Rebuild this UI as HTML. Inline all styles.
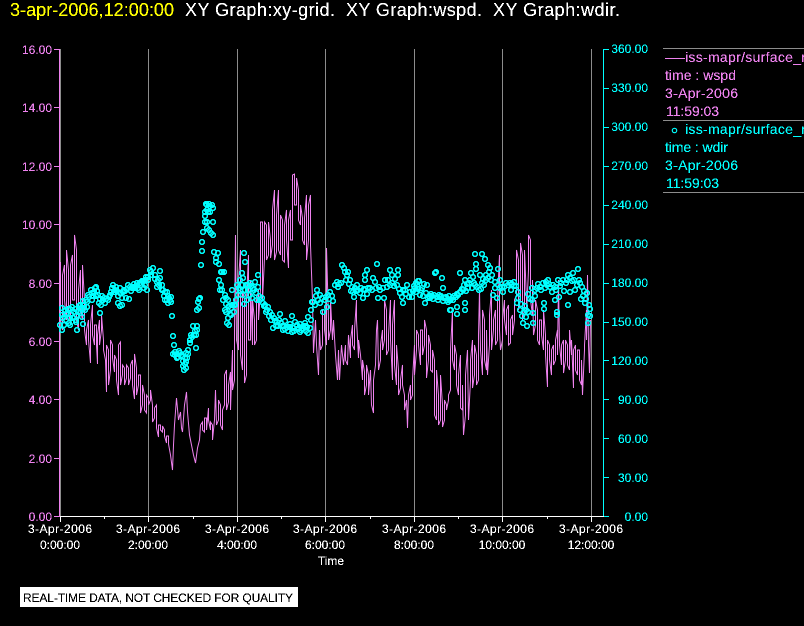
<!DOCTYPE html>
<html><head><meta charset="utf-8"><style>
html,body{margin:0;padding:0;background:#000;width:804px;height:626px;overflow:hidden}
svg{display:block;font-family:"Liberation Sans",sans-serif}
</style></head><body>
<svg width="804" height="626" viewBox="0 0 804 626">
<defs>
<marker id="m" markerUnits="userSpaceOnUse" markerWidth="8" markerHeight="8" refX="4" refY="4" overflow="visible"><circle cx="4" cy="4" r="2.4" fill="none" stroke="#0ff" stroke-width="1.5" shape-rendering="crispEdges"/></marker>
<filter id="a" filterUnits="userSpaceOnUse" x="0" y="0" width="804" height="626" color-interpolation-filters="sRGB"><feComponentTransfer><feFuncA type="discrete" tableValues="0 1 1"/></feComponentTransfer></filter>
</defs>
<rect width="804" height="626" fill="#000"/>
<g stroke="#8c8c8c" shape-rendering="crispEdges" fill="none">
<path d="M60.5 49V516M148.5 49V516M237.5 49V516M325.5 49V516M414.5 49V516M502.5 49V516M591.5 49V516"/>
<path d="M663 48.5H804M663 120.5H804M663 192.5H804"/>
</g>
<path d="M59.5 49V516M54 49.5H60M54 107.5H60M54 166.5H60M54 224.5H60M54 283.5H60M54 341.5H60M54 399.5H60M54 458.5H60M54 516.5H60" stroke="#ee82ee" fill="none" shape-rendering="crispEdges"/>
<path d="M603.5 49V516M603 49.5H609M603 88.5H609M603 127.5H609M603 166.5H609M603 205.5H609M603 244.5H609M603 283.5H609M603 322.5H609M603 360.5H609M603 399.5H609M603 438.5H609M603 477.5H609M603 516.5H609" stroke="#0ff" fill="none" shape-rendering="crispEdges"/>
<path d="M60 516.5H604M60.5 516V522M148.5 516V522M237.5 516V522M325.5 516V522M414.5 516V522M502.5 516V522M591.5 516V522M104.5 516V519M193.5 516V519M281.5 516V519M370.5 516V519M458.5 516V519M547.5 516V519" stroke="#fff" fill="none" shape-rendering="crispEdges"/>
<rect x="20" y="587" width="278" height="20" fill="#fff"/>
<g filter="url(#a)">
<g font-size="18">
<text x="10" y="16" fill="#ff0" textLength="164">3-apr-2006,12:00:00</text>
<g fill="#fff"><text x="185" y="16" textLength="150">XY Graph:xy-grid.</text><text x="346" y="16" textLength="136">XY Graph:wspd.</text><text x="493" y="16" textLength="127">XY Graph:wdir.</text></g>
</g>
<g font-size="12" fill="#ee82ee" text-anchor="end">
<text x="52" y="54">16.00</text><text x="52" y="112">14.00</text><text x="52" y="171">12.00</text><text x="52" y="229">10.00</text><text x="52" y="288">8.00</text><text x="52" y="346">6.00</text><text x="52" y="404">4.00</text><text x="52" y="463">2.00</text><text x="52" y="521">0.00</text>
</g>
<g font-size="12" fill="#0ff" text-anchor="end">
<text x="648" y="53">360.00</text><text x="648" y="92">330.00</text><text x="648" y="131">300.00</text><text x="648" y="170">270.00</text><text x="648" y="209">240.00</text><text x="648" y="248">210.00</text><text x="648" y="287">180.00</text><text x="648" y="326">150.00</text><text x="648" y="365">120.00</text><text x="648" y="404">90.00</text><text x="648" y="443">60.00</text><text x="648" y="482">30.00</text><text x="648" y="521">0.00</text>
</g>
<g font-size="12" fill="#fff" text-anchor="middle">
<text x="60" y="533" textLength="64">3-Apr-2006</text><text x="60" y="549">0:00:00</text>
<text x="148" y="533" textLength="64">3-Apr-2006</text><text x="148" y="549">2:00:00</text>
<text x="237" y="533" textLength="64">3-Apr-2006</text><text x="237" y="549">4:00:00</text>
<text x="325" y="533" textLength="64">3-Apr-2006</text><text x="325" y="549">6:00:00</text>
<text x="414" y="533" textLength="64">3-Apr-2006</text><text x="414" y="549">8:00:00</text>
<text x="502" y="533" textLength="64">3-Apr-2006</text><text x="502" y="549">10:00:00</text>
<text x="591" y="533" textLength="64">3-Apr-2006</text><text x="591" y="549">12:00:00</text>
<text x="331" y="565">Time</text>
</g>
<text x="23" y="602" font-size="12" fill="#000" textLength="270">REAL-TIME DATA, NOT CHECKED FOR QUALITY</text>
<g font-size="14" fill="#ee82ee">
<text x="685" y="62" textLength="128">iss-mapr/surface_m</text>
<text x="665" y="80" textLength="71">time : wspd</text>
<text x="665" y="98" textLength="73">3-Apr-2006</text>
<text x="666" y="116" textLength="53">11:59:03</text>
</g>
<g font-size="14" fill="#0ff">
<text x="685" y="134" textLength="128">iss-mapr/surface_m</text>
<text x="665" y="152" textLength="63">time : wdir</text>
<text x="665" y="170" textLength="73">3-Apr-2006</text>
<text x="666" y="188" textLength="53">11:59:03</text>
</g>
</g>
<path d="M665 58.5H685" stroke="#ee82ee" shape-rendering="crispEdges"/>
<circle cx="674.5" cy="130.5" r="2.2" fill="none" stroke="#0ff" stroke-width="1.2"/>
<polyline transform="translate(.5,0)" fill="none" stroke="#ee82ee" stroke-width="1" points="60,262 60,320 62,330 62,275 64,265 64,300 66,320 66,250 68,270 68,310 70,325 70,265 72,255 72,300 74,300 74,235 76,250 76,320 78,330 78,290 80,270 80,310 82,320 82,265 84,300 84,330 86,345 86,330 88,320 88,340 90,363 90,325 92,305 92,335 94,345 94,325 96,325 96,345 97,364 97,335 99,320 99,345 101,330 101,315 103,340 103,350 105,360 106,392 106,345 108,350 108,385 110,370 110,340 112,345 112,358 114,372 114,355 116,360 116,380 118,395 118,345 120,342 120,385 122,375 122,365 124,368 124,385 126,378 126,365 128,368 128,385 130,378 130,365 132,360 132,385 134,399 134,354 136,368 136,395 138,385 138,375 140,375 140,413 142,405 142,385 144,395 144,410 146,413 146,395 148,398 148,405 150,400 150,390 152,405 152,422 154,418 154,408 156,405 156,428 158,437 158,425 160,425 160,430 162,432 162,426 164,430 164,436 166,443 166,436 168,436 168,444 170,455 172,470 173,445 174,425 176,398 178,420 180,412 181,428 182,432 184,405 186,392 187,412 189,435 191,445 193,455 195,463 197,448 199,440 200,425 202,422 202,430 204,432 204,418 206,418 206,430 208,408 208,420 210,430 210,422 212,425 212,440 214,420 215,390 216,425 218,420 218,400 220,405 220,425 222,430 222,410 224,405 224,375 226,370 226,410 228,402 228,385 230,372 230,410 232,350 232,390 234,380 234,330 235,235 236,340 238,350 238,280 240,250 240,355 242,370 242,290 244,300 244,383 246,375 246,300 248,255 248,340 250,340 250,280 252,345 252,300 254,320 254,345 256,340 256,300 258,290 258,320 260,290 260,222 262,222 262,300 264,258 264,222 266,225 266,260 268,255 268,222 270,240 270,258 272,245 272,210 274,190 274,260 276,252 276,215 278,190 278,250 280,255 280,215 282,220 282,260 284,262 284,225 286,210 286,240 288,268 288,220 290,210 290,240 292,240 292,175 294,174 294,205 296,205 296,178 298,190 298,220 300,225 300,205 302,218 302,240 304,245 304,218 306,195 306,260 308,240 308,205 310,195 310,245 312,300 313,353 315,320 316,345 318,375 319,330 320,350 322,345 322,310 324,310 324,330 326,345 326,248 328,320 328,340 330,330 330,300 332,340 333,320 335,355 337,380 338,350 339,380 341,345 343,365 345,345 345,360 347,365 348,335 350,358 350,340 352,325 352,345 354,350 354,330 356,300 356,320 358,358 358,340 360,355 362,380 362,360 364,372 364,395 366,385 366,365 368,375 368,395 370,370 371,405 373,413 373,380 375,365 376,330 377,320 378,370 380,360 380,345 382,330 382,350 384,340 384,300 386,310 386,355 388,350 388,335 390,300 390,340 392,380 392,325 394,300 394,365 396,385 396,345 398,370 398,395 400,388 400,380 402,365 402,385 404,395 404,410 406,400 407,428 408,395 410,385 410,400 412,395 412,380 414,345 414,375 416,350 416,330 418,335 418,345 420,365 420,330 422,330 422,355 424,345 424,320 426,330 426,378 428,360 428,335 430,345 430,370 432,372 432,350 434,360 434,415 436,420 436,370 438,395 438,425 440,420 440,375 442,405 442,427 444,420 444,400 446,405 446,410 448,400 448,395 450,390 450,350 452,310 452,360 454,370 454,345 456,355 456,385 458,395 458,375 460,355 460,408 462,410 462,385 463,435 465,415 465,375 467,350 468,420 470,380 470,360 472,340 472,388 474,375 474,345 476,355 476,385 478,380 478,335 479,290 480,350 482,375 482,310 484,320 484,360 486,370 486,330 487,375 489,345 489,315 491,290 491,350 493,330 493,320 495,310 495,345 497,340 497,300 499,255 499,330 500,350 502,340 502,320 504,300 504,320 506,335 506,310 508,305 508,345 510,343 510,320 512,315 512,335 514,320 514,300 516,295 516,250 518,260 518,310 520,300 520,243 522,255 522,320 524,310 524,250 526,300 526,315 528,270 528,235 530,240 530,300 532,315 532,280 533,335 535,325 535,300 537,310 537,340 539,345 539,320 541,320 541,335 543,350 543,310 545,335 545,355 547,387 547,340 549,345 549,360 551,375 551,350 553,345 553,365 555,360 555,340 557,330 557,355 558,280 559,345 561,365 561,345 563,340 563,373 565,360 565,340 567,345 567,365 569,370 569,330 571,355 571,340 573,388 573,350 575,345 575,370 577,375 577,350 579,350 579,380 581,385 581,360 582,395 584,350 584,345 586,310 586,340 587,275 588,345 589,373 590,320"/>
<polyline fill="none" stroke="none" marker-start="url(#m)" marker-mid="url(#m)" marker-end="url(#m)" points="62,330 60,325 64,325 62,308 66,320 70,318 69,323 70,309 72,307 74,312 78,312 76,320 81,308 80,313 82,317 83,324 85,310 83,301 86,300 87,307 77,330 70,325 76,322 62,315 67,313 65,310 73,318 79,306 84,305 88,295 92,300 95,288 96,287 98,295 91,290 99,303 100,313 93,296 97,291 101,305 102,296 104,298 105,303 108,300 110,295 112,288 113,285 115,290 118,296 120,288 122,298 118,303 120,306 122,305 126,298 129,299 128,285 132,288 130,287 135,288 137,283 139,290 141,285 142,281 145,285 147,290 146,277 150,270 153,268 151,275 148,280 144,288 134,284 124,290 116,287 155,275 157,287 160,271 158,280 162,285 160,278 165,292 163,290 167,292 168,296 171,297 171,302 168,303 170,300 172,316 173,336 174,345 173,354 175,355 177,354 179,351 178,357 181,356 182,355 185,358 186,362 183,366 184,370 185,364 188,350 190,343 192,337 194,335 196,335 193,326 197,326 196,348 188,354 186,353 197,310 199,308 198,302 200,298 199,299 201,265 202,251 202,242 203,232 205,222 207,222 213,222 205,212 207,205 209,204 212,205 213,208 206,204 210,206 208,212 209,230 211,233 213,235 214,252 218,253 216,262 219,264 216,258 221,272 222,272 224,272 219,280 221,285 222,290 220,290 225,295 226,298 226,304 225,310 228,300 230,314 229,325 227,323 232,305 235,305 236,300 232,290 234,312 228,318 231,308 244,253 245,262 242,273 243,278 240,280 237,285 250,283 258,275 248,290 253,288 258,287 238,295 240,290 243,295 246,285 250,295 255,282 247,300 252,298 244,304 256,293 259,296 262,298 263,303 265,305 268,307 267,310 270,312 272,315 274,318 277,322 273,328 276,326 280,314 281,323 283,330 284,326 287,327 285,321 292,316 290,324 292,332 293,328 295,322 297,325 299,328 300,324 301,330 303,326 305,323 307,327 308,333 308,317 310,328 311,320 311,310 312,302 313,302 315,305 317,290 320,295 320,303 323,312 325,300 327,307 328,295 330,292 333,301 335,285 337,282 339,284 342,265 344,268 345,272 348,272 346,280 350,280 352,287 357,285 353,292 355,288 358,290 361,288 354,297 363,298 365,290 367,270 365,275 365,280 368,288 370,288 373,278 375,282 377,264 378,298 380,290 384,298 385,280 387,287 390,270 392,275 390,285 394,286 397,285 398,270 398,275 400,293 403,303 402,297 405,290 407,285 410,292 412,297 414,286 416,283 417,285 419,281 418,289 420,295 422,288 424,284 425,303 426,293 427,285 429,296 430,298 432,296 434,295 435,273 436,272 438,300 439,295 442,278 443,288 441,296 444,298 447,300 449,296 450,300 451,310 453,300 456,297 458,295 460,292 460,273 462,289 465,280 463,290 465,303 468,288 465,310 467,284 457,307 450,310 457,314 471,273 473,277 470,280 472,288 475,254 482,254 485,259 476,264 476,269 488,265 490,268 492,275 488,278 482,283 479,290 484,285 486,280 480,275 475,285 498,269 500,280 493,295 495,288 502,287 497,298 503,292 506,283 510,283 512,284 514,282 516,286 518,292 517,303 520,310 525,306 522,316 527,326 523,323 524,312 526,317 528,294 532,300 533,313 533,323 535,290 532,288 537,288 540,287 543,283 545,288 548,280 547,285 544,303 544,309 550,287 553,285 555,300 556,290 559,297 558,280 557,312 557,315 560,286 563,280 566,283 568,275 568,305 570,292 572,281 573,273 575,290 577,285 578,269 580,283 582,287 581,299 584,291 585,303 587,293 590,309 588,315 588,323 590,316"/>
<polyline fill="none" stroke="none" marker-start="url(#m)" marker-mid="url(#m)" marker-end="url(#m)" points="63,318 66,314 68,309 71,314 75,309 77,315 80,305 84,308 87,302 89,297 92,293 94,292 96,296 100,299 103,300 106,299 109,297 111,292 114,292 117,291 120,293 123,292 125,291 127,289 131,291 133,287 136,286 138,288 140,283 143,282 145,280 148,277 151,272 155,279 157,282 159,285 162,290 164,296 165,300 167,300 169,298 175,352 177,358 180,353 183,361 187,358 186,368 190,340 191,335 195,331 197,330 207,210 205,216 210,212 207,228 223,300 226,312 229,306 231,315 234,305 239,288 242,285 245,290 248,285 251,286 254,290 257,300 260,300 264,306 266,312 269,316 271,320 275,321 278,326 279,320 282,326 285,329 288,331 290,327 294,331 297,329 300,332 303,329 306,331 305,326 316,296 318,300 322,298 326,297 329,299 332,296 338,287 341,283 347,275 349,284 351,291 356,291 360,293 364,289 367,294 372,290 376,288 379,287 383,288 388,280 392,283 395,279 399,289 403,290 406,294 409,297 413,291 415,288 418,281 416,292 421,290 423,296 428,298 431,294 433,299 437,297 440,297 443,301 446,297 448,302 452,298 454,296 457,294 461,292 464,285 466,291 469,283 474,283 477,287 481,289 483,279 486,275 489,272 491,280 495,282 498,285 500,288 504,287 508,285 511,290 514,286 518,298 521,304 526,310 528,312 530,299 535,296 538,284 541,290 546,282 549,284 552,292 555,287 561,283 564,291 567,280 570,278 574,280 579,280 583,296 586,299 589,305"/>
</svg>
</body></html>
